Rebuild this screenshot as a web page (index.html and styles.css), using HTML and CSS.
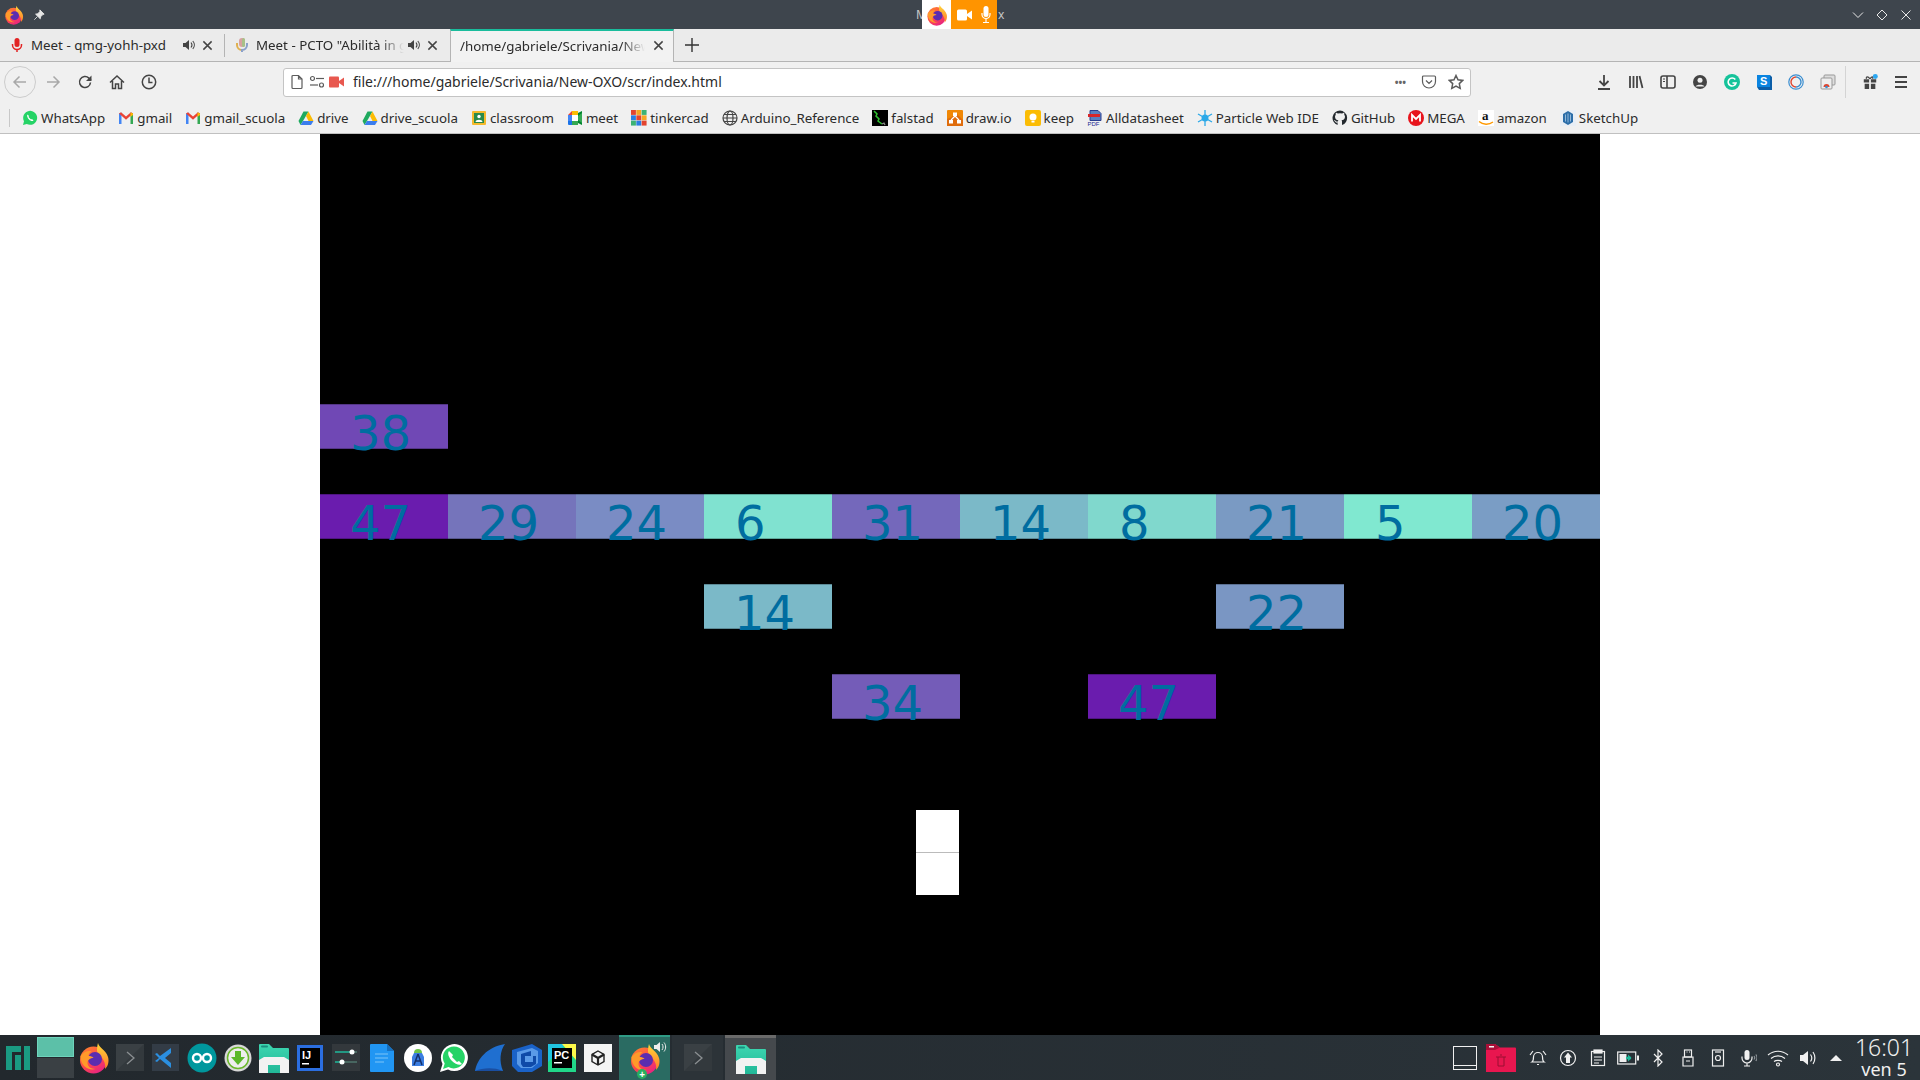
FILE: index.html
```html
<!DOCTYPE html>
<html lang="en">
<head>
    <meta charset="UTF-8">
    <title>New-OXO</title>
    <link rel="stylesheet" href="styles.css">
</head>
<body>
    <svg class="defs" width="0" height="0">
        <defs>
            <linearGradient id="ffBody" x1="0" y1="0" x2="0.6" y2="1">
                <stop offset="0" stop-color="#ff8a2a"/>
                <stop offset="0.6" stop-color="#ff4a4a"/>
                <stop offset="1" stop-color="#e8257e"/>
            </linearGradient>
            <linearGradient id="ffFlame" x1="0" y1="0" x2="0" y2="1">
                <stop offset="0" stop-color="#ffd83a"/>
                <stop offset="1" stop-color="#ff7a2a"/>
            </linearGradient>
            <linearGradient id="tealFolder" x1="0" y1="0" x2="0" y2="1">
                <stop offset="0" stop-color="#3dd6b0"/>
                <stop offset="1" stop-color="#22b898"/>
            </linearGradient>
            <symbol id="firefox" viewBox="0 0 32 32">
                <circle cx="15.5" cy="18" r="13.5" fill="url(#ffBody)"/>
                <path d="M20 1c1 5 8 7 10 14 1.500 5-.5 10-3 12 1-6-2-11-6-14-3-2-2-8-1-12z" fill="url(#ffFlame)"/>
                <circle cx="17" cy="17" r="7" fill="#5a2db0"/>
                <path d="M2.500 14c3-4 8-6 11-4.500-2 1-3 2.500-3 4.500 2 0 4 .5 5 2-3 0-6 1.500-6 5 0 3 3 6 8 6-7 2-15-3-15-13z" fill="#ff9a2a"/>
            </symbol>
            <symbol id="folder" viewBox="0 0 32 32">
                <path d="M1 3a1 1 0 0 1 1-1h9l4 4h15a1 1 0 0 1 1 1v24H1z" fill="url(#tealFolder)"/>
                <rect x="3" y="3.500" width="7" height="2" rx="1" fill="#1b8f80"/>
                <path d="M1 31V18l5-3h20l5 3v13h-9v-8H10v8z" fill="#f2f2f2"/>
            </symbol>
            <symbol id="terminal" viewBox="0 0 28 28">
                <rect width="28" height="27" fill="#3a4044"/>
                <path d="M0 27 28 0v27z" fill="#33393d"/>
                <path d="M11 8l7 6-7 6" fill="none" stroke="#8b8f92" stroke-width="1.300"/>
            </symbol>
            <symbol id="gmail" viewBox="0 0 16 16">
                <path d="M1 3.500 3.500 2.500V14H1z" fill="#4285f4"/>
                <path d="M15 3.500 12.500 2.500V14H15z" fill="#34a853"/>
                <path d="M1 3.500 3 2.200 8 6.500l5-4.300 2 1.300-7 6.200z" fill="#ea4335"/>
                <path d="M12.500 2.500 15 3.500v1.500l-2.500 2z" fill="#fbbc04"/>
            </symbol>
            <symbol id="gdrive" viewBox="0 0 16 16">
                <path d="M5.500 1.500h5L5 11 2.500 15 .5 11z" fill="#1faa5f"/>
                <path d="M10.500 1.500 15.500 11h-5L8 6z" fill="#fbbc04"/>
                <path d="M5 11h10.500L13 15H2.500z" fill="#3b7ded"/>
            </symbol>
        </defs>
    </svg>

    <header class="titlebar">
        <svg class="tb-firefox"><use href="#firefox"/></svg>
        <svg class="tb-pin" viewBox="0 0 14 14"><path d="M8 1l5 5-1.500.5-2.500 2.500-.5 2.500L3 6l2.500-.5L8 3zM5 9l-3.500 3.500" fill="#e6e6e6" stroke="#e6e6e6"/></svg>
        <div class="share">
            <span class="share-label">M</span>
            <span class="share-fox"><svg><use href="#firefox"/></svg></span>
            <span class="share-devices">
                <svg width="15" height="12" viewBox="0 0 15 12"><rect y="0.500" width="10" height="11" rx="1.500" fill="#fff"/><path d="M10 5l5-3.500v9L10 7z" fill="#fff"/></svg>
                <svg width="10" height="18" viewBox="0 0 10 18"><rect x="2.500" y="0" width="5" height="11" rx="2.500" fill="#fff"/><path d="M1 7v1.500a4 4 0 0 0 8 0V7M5 13v3M2 16.500h6" fill="none" stroke="#fff" stroke-width="1.200"/></svg>
            </span>
            <span class="share-label">x</span>
        </div>
        <div class="win-btns">
            <svg viewBox="0 0 12 12"><path d="M1 3.500l5 5 5-5" /></svg>
            <svg viewBox="0 0 12 12"><path d="M6 1l5 5-5 5-5-5z" /></svg>
            <svg viewBox="0 0 12 12"><path d="M1.500 1.500l9 9M10.500 1.500l-9 9" /></svg>
        </div>
    </header>

    <nav class="tabbar">
        <div class="tab">
            <svg class="tab-icon" viewBox="0 0 16 16"><rect x="5.500" y="1" width="5" height="9" rx="2.500" fill="#e22424"/><path d="M3.500 7v1a4.500 4.500 0 0 0 9 0V7M8 12.500V15" fill="none" stroke="#e22424" stroke-width="1.500"/></svg>
            <span class="tab-title">Meet - qmg-yohh-pxd</span>
            <svg class="tab-audio" viewBox="0 0 14 14"><path d="M1 5h2.500L7 2v10L3.500 9H1z" fill="#444"/><path d="M9 4.500c1.200 1.500 1.200 3.500 0 5M10.800 3c2 2.300 2 5.700 0 8" fill="none" stroke="#444" stroke-width="1.100"/></svg>
            <svg class="tab-close" viewBox="0 0 12 12"><path d="M1.500 1.500l9 9M10.500 1.500l-9 9"/></svg>
        </div>
        <div class="tab-sep"></div>
        <div class="tab">
            <svg class="tab-icon" viewBox="0 0 16 16"><rect x="5" y="1" width="6" height="9" rx="3" fill="#d8a0a0"/><rect x="8" y="1" width="3" height="9" rx="1.500" fill="#a8c088"/><path d="M3 6v2a5 5 0 0 0 5 5" fill="none" stroke="#e0b050" stroke-width="2"/><path d="M13 6v2a5 5 0 0 1-5 5v2" fill="none" stroke="#8aa0c8" stroke-width="2"/></svg>
            <span class="tab-title">Meet - PCTO "Abilità in gioco"</span>
            <svg class="tab-audio" viewBox="0 0 14 14"><path d="M1 5h2.500L7 2v10L3.500 9H1z" fill="#444"/><path d="M9 4.500c1.200 1.500 1.200 3.500 0 5M10.800 3c2 2.300 2 5.700 0 8" fill="none" stroke="#444" stroke-width="1.100"/></svg>
            <svg class="tab-close" viewBox="0 0 12 12"><path d="M1.500 1.500l9 9M10.500 1.500l-9 9"/></svg>
        </div>
        <div class="tab tab-active">
            <span class="tab-title">/home/gabriele/Scrivania/New-OXO/scr/index.html</span>
            <svg class="tab-close" viewBox="0 0 12 12"><path d="M1.500 1.500l9 9M10.500 1.500l-9 9"/></svg>
        </div>
        <svg class="tab-new" viewBox="0 0 14 14"><path d="M7 0v14M0 7h14"/></svg>
    </nav>

    <div class="toolbar">
        <span class="tool tool-back"><svg viewBox="0 0 16 16"><path d="M14 8H2M7.500 2.500 2 8l5.500 5.500"/></svg></span>
        <span class="tool tool-off"><svg viewBox="0 0 16 16"><path d="M2 8h12M8.500 2.500 14 8l-5.500 5.500"/></svg></span>
        <span class="tool"><svg viewBox="0 0 16 16"><path d="M13.500 8.500a5.500 5.500 0 1 1-1.600-4.400L14 6"/><path class="solid" d="M14.500 1.500v5.500H9z"/></svg></span>
        <span class="tool"><svg viewBox="0 0 16 16"><path d="M1 8.500 8 2l7 6.500M3.500 7v7.500h3V10h3v4.500h3V7"/></svg></span>
        <span class="tool"><svg viewBox="0 0 16 16"><circle cx="8" cy="8" r="6.700"/><path d="M8 3.500V8.500H11.500"/></svg></span>

        <div class="urlbar">
            <svg class="url-icon" viewBox="0 0 16 16"><path d="M3 2.500a1 1 0 0 1 1-1h5.500L13 5v8.500a1 1 0 0 1-1 1H4a1 1 0 0 1-1-1zM9.500 1.500V5H13"/></svg>
            <svg class="url-icon" viewBox="0 0 16 16"><circle cx="3.500" cy="4.500" r="2"/><path d="M7 4.500h8"/><circle cx="12.500" cy="11" r="2"/><path d="M1 11h8"/></svg>
            <svg class="url-cam" viewBox="0 0 16 16"><rect y="2.500" width="10" height="11" rx="1" fill="#e8584f"/><path d="M10 7l5-3.500v9L10 9z" fill="#e8584f"/></svg>
            <span class="url-text">file:///home/gabriele/Scrivania/New-OXO/scr/index.html</span>
            <span class="url-dots">•••</span>
            <svg class="url-icon" viewBox="0 0 16 16"><path d="M1.500 3a1 1 0 0 1 1-1h11a1 1 0 0 1 1 1v4.500a6.500 6.500 0 0 1-13 0zM5 6.500l3 3 3-3"/></svg>
            <svg class="url-icon" viewBox="0 0 16 16"><path d="M8 1.500l2 4.300 4.700.6-3.400 3.200.9 4.700L8 12l-4.200 2.300.9-4.700L1.300 6.400 6 5.800z" stroke-width="1.500"/></svg>
        </div>

        <span class="tool tool-first"><svg viewBox="0 0 16 16"><path d="M8 1v10M3.500 7 8 11.500 12.500 7M2 15h12" stroke-width="1.800"/></svg></span>
        <span class="tool"><svg viewBox="0 0 16 16"><path d="M2 2v12M5.500 2v12M9 2v12M11.500 2l3 12" stroke-width="1.800"/></svg></span>
        <span class="tool"><svg viewBox="0 0 16 16"><rect x="1" y="2" width="14" height="12" rx="2" stroke-width="1.600"/><path d="M7 2v12" stroke-width="1.600"/><path class="thin" d="M3 5h2M3 7.500h2"/></svg></span>
        <span class="tool"><svg viewBox="0 0 16 16"><circle class="solid" cx="8" cy="8" r="7"/><circle cx="8" cy="6.300" r="2.500" fill="#f0f0f0" stroke="none"/><path d="M3.500 12.500c1-2.500 8-2.500 9 0" fill="#f0f0f0" stroke="none"/></svg></span>
        <span class="tool"><svg viewBox="0 0 16 16"><circle cx="8" cy="8" r="8" fill="#15c39a" stroke="none"/><path d="M11.300 5.500A4 4 0 1 0 12 9H8.500" stroke="#fff" stroke-width="1.600"/></svg></span>
        <span class="tool"><svg viewBox="0 0 16 16"><path d="M1 1h13v12H1z" fill="#0a84e0" stroke="none"/><path d="M14 1l2 2v13H3l-2-3h13z" fill="#0b5ea8" stroke="none"/><text x="4" y="11" class="ext-s">S</text></svg></span>
        <span class="tool"><svg viewBox="0 0 16 16"><circle cx="8" cy="8" r="7.200" stroke="#3a8ed0" stroke-width="1.200"/><path d="M8 3a5 5 0 0 0 0 10" stroke="#e0452e" stroke-width="1.400"/><path d="M8 3a5 5 0 0 1 0 10" stroke="#3a8ed0" stroke-width="1.400"/></svg></span>
        <span class="tool"><svg viewBox="0 0 16 16"><rect x="4" y="1" width="11" height="10" rx="1" fill="#ddd" stroke="#999" stroke-width="1"/><rect x="1" y="4" width="11" height="11" rx="1" fill="#eee" stroke="#999" stroke-width="1"/><path d="M3.500 13a3 3 0 0 1 6 0z" fill="#e0452e" stroke="none"/><circle cx="6.500" cy="13" r="1.300" fill="#3a8ed0" stroke="none"/></svg></span>
        <div class="tool-sep"></div>
        <span class="tool"><svg viewBox="0 0 18 18"><path class="solid" d="M2 6h6v3.500H2zM10 6h6v3.500h-6zM3 11h5v6H3zM10 11h5v6h-5z" stroke="none"/><path d="M9 5.500c-2-3-5-3-4 0M9 5.500c2-3 4-3 3 0" stroke-width="1.300"/><circle cx="15" cy="2.800" r="2.800" fill="#2da7f0" stroke="none"/></svg></span>
        <span class="tool tool-menu"><svg viewBox="0 0 16 16"><path d="M2 3h12M2 8h12M2 13h12" stroke-width="1.800"/></svg></span>
    </div>

    <div class="bookmarks">
        <div class="bm-sep"></div>
        <a class="bm"><svg viewBox="0 0 16 16"><path d="M1 15l1-3.800A7 7 0 1 1 4.800 14z" fill="#25d366"/><path d="M5.500 4.500c-1 1 0 3.500 1.500 5s3.500 2 4.500 1l-1.500-1.500-1 .5-2.500-2.500.5-1z" fill="#fff"/></svg>WhatsApp</a>
        <a class="bm"><svg><use href="#gmail"/></svg>gmail</a>
        <a class="bm"><svg><use href="#gmail"/></svg>gmail_scuola</a>
        <a class="bm"><svg><use href="#gdrive"/></svg>drive</a>
        <a class="bm"><svg><use href="#gdrive"/></svg>drive_scuola</a>
        <a class="bm"><svg viewBox="0 0 16 16"><rect x="1" y="1" width="14" height="14" rx="1" fill="#f5b92b"/><rect x="3" y="3" width="10" height="10" fill="#2a8a4a"/><circle cx="8" cy="6.500" r="1.700" fill="#fff"/><path d="M4.500 12c0-3 7-3 7 0z" fill="#fff"/></svg>classroom</a>
        <a class="bm"><svg viewBox="0 0 16 16"><path d="M1 5l4-4v4z" fill="#ea4335"/><path d="M1 5h4v6H1z" fill="#4285f4"/><path d="M5 1h6v4H5z" fill="#fbbc04"/><path d="M5 11h6v4H5z" fill="#34a853"/><path d="M1 11h4v4H2a1 1 0 0 1-1-1z" fill="#1a73e8"/><path d="M5 5h6v6H5z" fill="#fff"/><path d="M11 3v10l4 2V1z" fill="#00832d"/><path d="M11 6l4-3v10l-4-3z" fill="#34a853"/></svg>meet</a>
        <a class="bm"><svg viewBox="0 0 15 15"><rect width="4.600" height="4.600" fill="#e2442f"/><rect x="5" width="4.600" height="4.600" fill="#f5a623"/><rect x="10" width="4.600" height="4.600" fill="#3bb273"/><rect y="5" width="4.600" height="4.600" fill="#2a7de1"/><rect x="5" y="5" width="4.600" height="4.600" fill="#e2442f"/><rect x="10" y="5" width="4.600" height="4.600" fill="#f5a623"/><rect y="10" width="4.600" height="4.600" fill="#3bb273"/><rect x="5" y="10" width="4.600" height="4.600" fill="#2a7de1"/><rect x="10" y="10" width="4.600" height="4.600" fill="#e2442f"/></svg>tinkercad</a>
        <a class="bm"><svg viewBox="0 0 16 16" fill="none" stroke="#444" stroke-width="1.200"><circle cx="8" cy="8" r="7"/><ellipse cx="8" cy="8" rx="3" ry="7"/><path d="M1 8h14M2 4.500h12M2 11.500h12"/></svg>Arduino_Reference</a>
        <a class="bm"><svg viewBox="0 0 16 16"><rect width="16" height="16" fill="#000"/><path d="M2 1l3 3-1 2 3 3-1 2 4 3" fill="none" stroke="#2fc02f" stroke-width="1.500"/><path d="M10 14l2-1 1 2" fill="none" stroke="#888" stroke-width="1.300"/></svg>falstad</a>
        <a class="bm"><svg viewBox="0 0 16 16"><rect width="16" height="16" rx="1" fill="#f08705"/><path d="M0 16V9l5-2 3-5 8 8v6z" fill="#df6c0c"/><g fill="#fff"><rect x="6" y="2.500" width="4" height="3.500"/><rect x="2" y="10" width="4" height="3.500"/><rect x="10" y="10" width="4" height="3.500"/></g><path d="M8 6l-4 4M8 6l4 4" stroke="#fff" stroke-width="1.200"/></svg>draw.io</a>
        <a class="bm"><svg viewBox="0 0 16 16"><rect width="16" height="16" rx="2" fill="#fbbc04"/><circle cx="8" cy="7" r="3.500" fill="#fff"/><rect x="6.500" y="11" width="3" height="1.500" fill="#fff"/></svg>keep</a>
        <a class="bm"><svg viewBox="0 0 16 16"><path d="M3 .5h8l3 3v7H3z" fill="#5a7fc0" stroke="#2a3f90"/><rect x="1" y="4" width="12" height="3" fill="#d8262a"/><text x="0.500" y="15.800" class="ext-pdf">PDF</text></svg>Alldatasheet</a>
        <a class="bm"><svg viewBox="0 0 16 16"><path d="M8 0v16M1 4l14 8M15 4 1 12" stroke="#2aa8e8" stroke-width="1.300"/><circle cx="8" cy="8" r="3.500" fill="#2aa8e8"/></svg>Particle Web IDE</a>
        <a class="bm"><svg viewBox="0 0 16 16"><path d="M8 .5a7.500 7.500 0 0 0-2.400 14.600v-2.500c-2 .4-2.500-1-2.500-1-.4-.9-.9-1.200-.9-1.200-.7-.5.1-.5.1-.5.8.1 1.200.8 1.200.8.7 1.200 1.900.9 2.400.7.1-.5.300-.9.500-1.100C4.800 10 3 9.300 3 6.700c0-.8.300-1.500.8-2-.1-.2-.3-1 .1-2 0 0 .6-.2 2.100.8a7 7 0 0 1 4 0c1.500-1 2.100-.8 2.100-.8.400 1 .2 1.800.1 2 .5.500.8 1.200.8 2 0 2.600-1.800 3.300-3.500 3.500.300.200.5.700.5 1.400v3.500A7.500 7.500 0 0 0 8 .5z" fill="#24292e"/></svg>GitHub</a>
        <a class="bm"><svg viewBox="0 0 16 16"><circle cx="8" cy="8" r="8" fill="#e8141c"/><path d="M4 11.500V5l4 4 4-4v6.500" fill="none" stroke="#fff" stroke-width="1.800"/></svg>MEGA</a>
        <a class="bm"><svg viewBox="0 0 16 16"><rect width="16" height="16" fill="#fff"/><text x="4" y="10" class="ext-a">a</text><path d="M1 11.500c4 3.500 10 3.500 14 .5" fill="none" stroke="#f90" stroke-width="1.400"/></svg>amazon</a>
        <a class="bm"><svg viewBox="0 0 16 16"><rect width="16" height="16" fill="#e8eef5"/><path d="M3 4l5-3 5 3v8l-5 3-5-3z" fill="#2b6da8"/><path d="M5.500 4.500v7M8 3.500v9M10.500 4.500v7" stroke="#a8cbe8" stroke-width=".8"/></svg>SketchUp</a>
    </div>

    <main class="viewport">
        <div class="game">
            <div class="cell col-0 row-0 n38">38</div>

            <div class="cell col-0 row-1 n47">47</div>
            <div class="cell col-1 row-1 n29">29</div>
            <div class="cell col-2 row-1 n24">24</div>
            <div class="cell col-3 row-1 n6 one">6</div>
            <div class="cell col-4 row-1 n31">31</div>
            <div class="cell col-5 row-1 n14">14</div>
            <div class="cell col-6 row-1 n8 one">8</div>
            <div class="cell col-7 row-1 n21">21</div>
            <div class="cell col-8 row-1 n5 one">5</div>
            <div class="cell col-9 row-1 n20">20</div>

            <div class="cell col-3 row-2 n14">14</div>
            <div class="cell col-7 row-2 n22">22</div>

            <div class="cell col-4 row-3 n34">34</div>
            <div class="cell col-6 row-3 n47">47</div>

            <div class="player"></div>
        </div>
    </main>

    <footer class="taskbar">
        <span class="launcher">
            <svg width="24" height="24" viewBox="0 0 24 24"><path d="M0 0h15v6H6v18H0zM9 9h6v15H9zM18 0h6v24h-6z" fill="#1a9a82"/></svg>
        </span>
        <div class="pager"><div class="desk desk-on"></div><div class="desk"></div></div>
        <span class="launcher launcher-first"><svg width="32" height="32"><use href="#firefox"/></svg></span>
        <span class="launcher"><svg width="28" height="28"><use href="#terminal"/></svg></span>
        <span class="launcher"><svg width="28" height="28" viewBox="0 0 28 28"><rect width="27" height="27" fill="#333c46"/><path d="M19 4v20L8 15l-3 3-2-1 4-3-4-4 2-1 3 3z" fill="#2b8fe0"/><path d="M19 9l-6 5 6 5z" fill="#333c46"/></svg></span>
        <span class="launcher"><svg width="30" height="30" viewBox="0 0 30 30"><circle cx="15" cy="15" r="14.500" fill="#00979d"/><g fill="none" stroke="#fff" stroke-width="2.400"><circle cx="10" cy="15" r="4"/><circle cx="20" cy="15" r="4"/></g></svg></span>
        <span class="launcher"><svg width="28" height="28" viewBox="0 0 28 28"><circle cx="14" cy="14" r="13.500" fill="#d8d8d8"/><circle cx="14" cy="14" r="10.500" fill="#eee" stroke="#6ab82a" stroke-width="1.500"/><path d="M11 7h6v6h4l-7 8-7-8h4z" fill="#5cb82a"/></svg></span>
        <span class="launcher"><svg width="32" height="32"><use href="#folder"/></svg></span>
        <span class="launcher"><svg width="26" height="26" viewBox="0 0 26 26"><rect width="26" height="26" fill="#2b6ee0"/><rect x="3" y="3" width="20" height="20" fill="#000"/><text x="5" y="14" class="ext-ij">IJ</text><rect x="5" y="18" width="7" height="1.500" fill="#fff"/></svg></span>
        <span class="launcher"><svg width="28" height="28" viewBox="0 0 28 28"><rect width="28" height="27" fill="#33383c"/><path d="M3 8h22M3 18h22" stroke="#1fb89a" stroke-width="1.500"/><path d="M18 8h7M10 18h15" stroke="#555" stroke-width="1.500"/><circle cx="20" cy="8" r="2.500" fill="#fff"/><circle cx="10" cy="18" r="2.500" fill="#fff"/></svg></span>
        <span class="launcher"><svg width="24" height="28" viewBox="0 0 24 28"><path d="M0 1a1 1 0 0 1 1-1h16l7 7v20a1 1 0 0 1-1 1H1a1 1 0 0 1-1-1z" fill="#2196f3"/><path d="M17 0l7 7h-7z" fill="#1670bf"/><path d="M5 10h13M5 14h13M5 18h9" stroke="#7cc3f7" stroke-width="1.200"/></svg></span>
        <span class="launcher"><svg width="28" height="28" viewBox="0 0 28 28"><circle cx="14" cy="14" r="14" fill="#fff"/><path d="M8 13l2-4h8l2 4v9H8z" fill="#3b7de0"/><path d="M14 10l-4 11M14 10l4 11M11 17h6" stroke="#14306a" stroke-width="1.500" fill="none"/><path d="M10 9a4 4 0 0 1 8 0z" fill="#6cc24a"/></svg></span>
        <span class="launcher"><svg width="30" height="30" viewBox="0 0 30 30"><path d="M1 29l2.500-8A13.500 13.500 0 1 1 9 26.500z" fill="#fff"/><path d="M4 26l1.700-5.500A11 11 0 1 1 9.500 24z" fill="#25d366"/><path d="M10 8c-2 2 0 7 3 10s8 5 10 3l-3-3-2 1-5-5 1-2z" fill="#fff"/></svg></span>
        <span class="launcher"><svg width="30" height="28" viewBox="0 0 30 28"><path d="M0 27C2 15 12 3 30 0c-5 7-6 17-2 27z" fill="#1f6fd0"/><path d="M0 27c8-3 18-4 28 0z" fill="#1a4ea0"/></svg></span>
        <span class="launcher"><svg width="32" height="28" viewBox="0 0 32 28"><path d="M2 6l20-6 10 6v16l-10 6H8l-6-6z" fill="#1a62c8"/><path d="M7 8l15-4 6 3v12l-6 5H11l-4-4z" fill="#5a9ae8"/><path d="M11 10l10-3v5h-6v6h8v-6h3v8l-5 3H13l-2-3z" fill="#0f4aa8"/></svg></span>
        <span class="launcher"><svg width="28" height="28" viewBox="0 0 28 28"><path d="M0 0h28v28H0z" fill="#21d789"/><path d="M0 0h18L0 18z" fill="#21c4e0"/><path d="M28 0v16L14 0z" fill="#fcf84a"/><rect x="4" y="4" width="20" height="20" fill="#000"/><text x="6" y="14.500" class="ext-ij">PC</text><rect x="6" y="18" width="8" height="1.500" fill="#fff"/></svg></span>
        <span class="launcher"><svg width="28" height="28" viewBox="0 0 28 28"><rect width="28" height="28" fill="#f4f4f4"/><path d="M14 7l6 3.500v7L14 21l-6-3.500v-7z" fill="none" stroke="#222" stroke-width="1.400"/><path d="M14 14 8 10.500M14 14l6-3.500M14 14v7" stroke="#222" stroke-width="2.200"/></svg></span>

        <div class="task task-active">
            <svg width="32" height="32"><use href="#firefox"/></svg>
            <svg class="task-sound" viewBox="0 0 14 14"><path d="M1 5h2.500L7 2v10L3.500 9H1z" fill="#eee"/><path d="M9 4c1.400 1.800 1.400 4.200 0 6M11 2.500c2.200 2.700 2.200 6.300 0 9" fill="none" stroke="#eee"/></svg>
            <span class="task-plus">+</span>
        </div>
        <div class="task"><svg width="28" height="28"><use href="#terminal"/></svg></div>
        <div class="task task-folder"><svg width="32" height="32"><use href="#folder"/></svg></div>

        <div class="tray">
            <div class="show-desktop"></div>
            <svg class="tray-folder" viewBox="0 0 30 28"><path d="M0 1a1 1 0 0 1 1-1h8l5 3.500h15a1 1 0 0 1 1 1V28H0z" fill="#e8164f"/><path d="M0 0h9l5 3.500L9 6H0z" fill="#a81038"/><rect x="3" y="2" width="5" height="1.500" fill="#f5f5f5"/><path d="M10 13h10M12 13v9h6v-9M14 11h2" fill="none" stroke="#9a0f33"/></svg>
            <div class="tray-icons">
                <span class="tray-ic"><svg viewBox="0 0 18 18"><path d="M3 13c1.500-1 1.500-3 1.500-5a4.500 4.500 0 0 1 9 0c0 2 0 4 1.500 5zM8 15.500h2"/><path d="M1 6l3-4M17 6l-3-4"/></svg></span>
                <span class="tray-ic"><svg viewBox="0 0 18 18"><circle cx="9" cy="9" r="7.500"/><path class="solid" d="M9 3.500 13 8.500H11V14H7V8.500H5z" stroke="none"/></svg></span>
                <span class="tray-ic"><svg viewBox="0 0 18 18"><rect x="2.500" y="2.500" width="13" height="14"/><rect class="solid" x="5" y="1" width="8" height="3"/><path d="M5 8h8M5 11h8M5 14h5"/></svg></span>
                <span class="tray-ic tray-wide"><svg viewBox="0 0 22 14"><rect x="0.700" y="1" width="18" height="12"/><rect class="solid" x="20" y="4.500" width="2" height="5" stroke="none"/><rect class="solid" x="2.500" y="3" width="7" height="8" stroke="none"/><path d="M9 7h5" stroke="#1fb89a" stroke-width="2.500"/><path d="M11 3.500 14.500 7 11 10.500" fill="#1fb89a" stroke="none"/></svg></span>
                <span class="tray-ic"><svg viewBox="0 0 18 18"><path d="M5 5l8 8-4 4V1l4 4-8 8"/></svg></span>
                <span class="tray-ic"><svg viewBox="0 0 18 18"><rect x="5.500" y="1" width="7" height="7"/><path d="M4 8h10v9H4zM7 12h4"/><path d="M7.500 3h1M10 3h1"/></svg></span>
                <span class="tray-ic"><svg viewBox="0 0 18 18"><rect x="3.500" y="1" width="11" height="16"/><circle cx="9" cy="9" r="2.500"/><path d="M6 3h6"/></svg></span>
                <span class="tray-ic"><svg viewBox="0 0 18 18"><rect class="solid" x="5.500" y="1" width="5" height="10" rx="2.500" stroke="none"/><path d="M3 7.500v1.500a5 5 0 0 0 10 0V7.500M8 14v3M5 17h6"/><path class="faint" d="M15 7c.8 1 .8 2.500 0 3.500M16.800 5.500c1.500 2 1.500 4.500 0 6.500"/></svg></span>
                <span class="tray-ic tray-wide"><svg viewBox="0 0 22 17"><path d="M1 5.500c6-5 14-5 20 0M4 9c4-3.500 10-3.500 14 0M7 12c2-1.500 6-1.500 8 0"/><circle cx="11" cy="15" r="1.500"/></svg></span>
                <span class="tray-ic"><svg viewBox="0 0 18 18"><path class="solid" d="M1 6h3l5-4v14l-5-4H1z" stroke="none"/><path d="M11.500 5.500c1.500 2 1.500 5 0 7M14 3c2.500 3.500 2.500 8.500 0 12"/></svg></span>
                <span class="tray-ic"><svg viewBox="0 0 18 18"><path class="solid" d="M1 12 7 6l6 6z" stroke="none"/></svg></span>
            </div>
            <div class="clock">
                <div class="clock-time">16:01</div>
                <div class="clock-date">ven 5</div>
            </div>
        </div>
    </footer>
</body>
</html>
```

FILE: styles.css
```css
* {
    box-sizing: border-box;
}
body {
    margin: 0;
    height: 1080px;
    display: flex;
    flex-direction: column;
    overflow: hidden;
    background: white;
    font-family: "Noto Sans", sans-serif;
    font-size: 13.33px;
    color: #2b2b2b;
}
.defs {
    position: absolute;
}

/* window title bar */
.titlebar {
    height: 29px;
    flex: none;
    background: #3e454d;
    display: flex;
    align-items: center;
    position: relative;
}
.tb-firefox {
    width: 20px;
    height: 20px;
    margin-left: 4px;
}
.tb-pin {
    width: 12px;
    height: 12px;
    margin-left: 9px;
}
.share {
    position: absolute;
    left: 916px;
    top: 0;
    height: 29px;
    display: flex;
    align-items: center;
    color: #c8c8c8;
    font-size: 12px;
}
.share-label {
    width: 6px;
    line-height: 29px;
}
.share-label:last-child {
    margin-left: 1px;
}
.share-fox {
    width: 29px;
    height: 29px;
    background: white;
    display: flex;
    align-items: center;
    justify-content: center;
}
.share-fox svg {
    width: 22px;
    height: 24px;
}
.share-devices {
    width: 46px;
    height: 29px;
    background: #ff9400;
    display: flex;
    align-items: center;
    justify-content: center;
    gap: 9px;
}
.win-btns {
    margin-left: auto;
    display: flex;
    gap: 12px;
    padding-right: 8px;
}
.win-btns svg {
    width: 12px;
    height: 12px;
    fill: none;
    stroke: #e8e8e8;
    stroke-width: 1;
}

/* tabs */
.tabbar {
    height: 33px;
    flex: none;
    background: #ebebeb;
    border-bottom: 1px solid #b4b4b4;
    display: flex;
    align-items: stretch;
}
.tab {
    width: 225px;
    display: flex;
    align-items: center;
    padding: 0 12px 0 9px;
    flex: none;
}
.tab-sep {
    width: 1px;
    margin: 5px 0 4px;
    margin-left: -1px;
    background: #b4b4b4;
}
.tab-icon {
    width: 16px;
    height: 16px;
    margin-right: 6px;
    flex: none;
}
.tab-title {
    flex: 1;
    white-space: nowrap;
    overflow: hidden;
    -webkit-mask-image: linear-gradient(to left, transparent 0, black 24px);
    mask-image: linear-gradient(to left, transparent 0, black 24px);
}
.tab:first-child .tab-title {
    -webkit-mask-image: none;
    mask-image: none;
}
.tab-audio {
    width: 14px;
    height: 14px;
    margin-left: 3px;
    margin-right: 6px;
    flex: none;
}
.tab-close {
    width: 11px;
    height: 11px;
    flex: none;
    fill: none;
    stroke: #444;
    stroke-width: 1.6;
}
.tab-active {
    width: 224px;
    background: #f2f2f2;
    border-top: 2px solid #1abc9c;
    border-left: 1px solid #b4b4b4;
    border-right: 1px solid #b4b4b4;
    margin-bottom: -1px;
    padding: 0 9px 2px 9px;
    gap: 8px;
}
.tab-new {
    width: 14px;
    height: 14px;
    align-self: center;
    margin-left: 11px;
    fill: none;
    stroke: #333;
    stroke-width: 1.4;
}

/* navigation toolbar */
.toolbar {
    height: 40px;
    flex: none;
    background: #f0f0f0;
    display: flex;
    align-items: center;
    padding-left: 4px;
}
.tool {
    width: 32px;
    height: 32px;
    flex: none;
    display: flex;
    align-items: center;
    justify-content: center;
}
.tool svg {
    width: 16px;
    height: 16px;
    fill: none;
    stroke: #444;
    stroke-width: 1.5;
}
.tool .solid {
    fill: #444;
    stroke: none;
}
.tool .thin {
    stroke-width: 1;
}
.tool-menu {
    margin-left: -1px;
}
.ext-s {
    font-family: "Liberation Sans", sans-serif;
    font-weight: bold;
    font-size: 11px;
    fill: white;
    stroke: none;
}
.tool-back {
    border: 1px solid #ccc;
    border-radius: 50%;
    margin-right: 1px;
}
.tool-back svg,
.tool-off svg {
    stroke: #a8a8a8;
}
.urlbar {
    width: 1188px;
    height: 29px;
    flex: none;
    margin-left: 118px;
    background: white;
    border: 1px solid #c4c4c4;
    border-radius: 3px;
    display: flex;
    align-items: center;
    padding: 0 2px 0 5px;
}
.url-icon {
    width: 16px;
    height: 16px;
    flex: none;
    fill: none;
    stroke: #5c5c5c;
    stroke-width: 1.2;
    margin-right: 4px;
}
.url-cam {
    width: 16px;
    height: 16px;
    flex: none;
    margin-right: 8px;
}
.url-text {
    flex: 1;
    font-size: 14px;
    padding-bottom: 2px;
}
.url-dots {
    color: #666;
    font-size: 10px;
    font-weight: bold;
    margin-right: 15px;
}
.url-icon:last-child {
    margin-left: 7px;
}
.tool-first {
    margin-left: 117px;
}
.tool-sep {
    width: 1px;
    height: 32px;
    margin: 0 8px 0 1px;
    background: #d4d4d4;
}

/* bookmarks */
.bookmarks {
    height: 32px;
    flex: none;
    background: #f0f0f0;
    border-bottom: 1px solid #c0c0c0;
    display: flex;
    align-items: center;
    padding-left: 9px;
    gap: 13px;
}
.bm-sep {
    width: 1px;
    height: 18px;
    background: #c8c8c8;
    margin-right: -1px;
}
.bm {
    display: flex;
    align-items: center;
    gap: 3px;
    white-space: nowrap;
}
.bm svg {
    width: 16px;
    height: 16px;
    flex: none;
}
.ext-pdf {
    font-family: "Liberation Sans", sans-serif;
    font-size: 6px;
    fill: #1a2a90;
}
.ext-a {
    font-family: "Liberation Serif", serif;
    font-size: 13px;
    font-weight: bold;
    fill: #111;
}
.ext-ij {
    font-family: "Liberation Sans", sans-serif;
    font-size: 11px;
    font-weight: bold;
    fill: white;
}

/* page */
.viewport {
    flex: 1;
    display: flex;
    justify-content: center;
    min-height: 0;
}
.game {
    width: 1280px;
    background: black;
    position: relative;
    display: grid;
    grid-template-columns: repeat(10, 128px);
    grid-auto-rows: 45px;
    row-gap: 45px;
    padding-top: 270px;
    align-content: start;
}
.cell {
    padding: 6px 0 0 30px;
    border-top: 1px solid rgba(0, 0, 0, 0.25);
    border-bottom: 1px solid rgba(0, 0, 0, 0.25);
    font-family: "DejaVu Sans", sans-serif;
    font-size: 48px;
    line-height: 45px;
    color: #006da0;
}
.cell.one {
    padding-left: 31px;
}
.col-0 { grid-column: 1; }
.col-1 { grid-column: 2; }
.col-2 { grid-column: 3; }
.col-3 { grid-column: 4; }
.col-4 { grid-column: 5; }
.col-5 { grid-column: 6; }
.col-6 { grid-column: 7; }
.col-7 { grid-column: 8; }
.col-8 { grid-column: 9; }
.col-9 { grid-column: 10; }
.row-0 { grid-row: 1; }
.row-1 { grid-row: 2; }
.row-2 { grid-row: 3; }
.row-3 { grid-row: 4; }
.n47 { background: #6a1cae; }
.n38 { background: #7048b5; }
.n34 { background: #745cb8; }
.n31 { background: #7468bb; }
.n29 { background: #7574bb; }
.n24 { background: #7a8cc4; }
.n22 { background: #7a96c3; }
.n21 { background: #7a9ac3; }
.n20 { background: #7a9dc5; }
.n14 { background: #7bb9c8; }
.n8 { background: #80d8cd; }
.n6 { background: #80e2d0; }
.n5 { background: #80e8d0; }
.player {
    position: absolute;
    left: 596px;
    top: 676px;
    width: 43px;
    height: 85px;
    background: linear-gradient(white 0 42px, #bbb 42px 43px, white 43px);
}

/* desktop panel */
.taskbar {
    height: 45px;
    flex: none;
    background: linear-gradient(to right, #22282d, #2b343a);
    display: flex;
    align-items: center;
}
.launcher {
    width: 36px;
    height: 45px;
    flex: none;
    display: flex;
    align-items: center;
    justify-content: center;
}
.launcher-first {
    margin-left: 2px;
}
.pager {
    width: 37px;
    margin-left: 1px;
    display: flex;
    flex-direction: column;
    gap: 1px;
}
.desk {
    height: 20px;
    background: #3a4044;
}
.desk-on {
    background: #5cc0a8;
    border: 1px solid #6fd4bc;
}
.task {
    width: 51px;
    height: 45px;
    flex: none;
    margin-right: 2px;
    background: #2c3338;
    display: flex;
    align-items: center;
    justify-content: center;
    position: relative;
}
.task-active {
    margin-left: 3px;
    background: #2a6b62;
    border-top: 2px solid #2f9b85;
}
.task-folder {
    background: #45494d;
    border-top: 3px solid #6a6a6a;
}
.task-sound {
    position: absolute;
    right: 3px;
    top: 3px;
    width: 14px;
    height: 14px;
}
.task-plus {
    position: absolute;
    left: 18px;
    bottom: 1px;
    width: 10px;
    height: 10px;
    border-radius: 50%;
    background: #27ae60;
    color: white;
    font-size: 10px;
    line-height: 10px;
    text-align: center;
    font-weight: bold;
}
.tray {
    margin-left: auto;
    display: flex;
    align-items: center;
    padding-right: 5px;
}
.show-desktop {
    width: 24px;
    height: 24px;
    border: 1px solid #f0f0f0;
    border-bottom-width: 1px;
    box-shadow: inset 0 -3px 0 #2a3338, inset 0 -4px 0 #f0f0f0;
}
.tray-folder {
    width: 30px;
    height: 28px;
    margin: 0 7px 0 9px;
}
.tray-icons {
    display: flex;
}
.tray-ic {
    width: 30px;
    display: flex;
    justify-content: center;
}
.tray-ic svg {
    width: 18px;
    height: 18px;
    fill: none;
    stroke: #f0f0f0;
    stroke-width: 1.2;
}
.tray-ic.tray-wide svg {
    width: 22px;
}
.tray-ic .solid {
    fill: #f0f0f0;
}
.tray-ic .faint {
    stroke: #8a9095;
}
.clock {
    width: 62px;
    text-align: center;
    color: #f0f0f0;
}
.clock-time {
    font-size: 23px;
    line-height: 23px;
    font-weight: 300;
}
.clock-date {
    font-size: 18px;
    line-height: 20px;
}
```
